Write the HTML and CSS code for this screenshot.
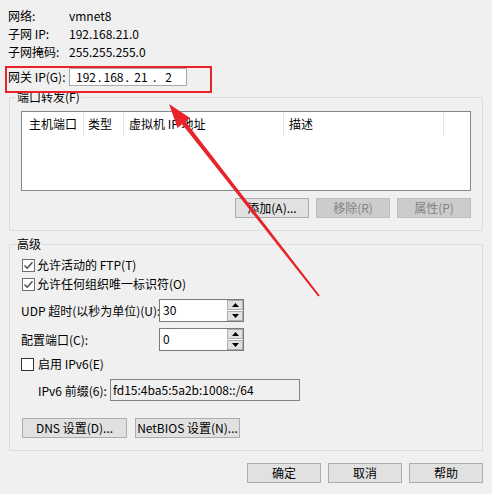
FILE: index.html
```html
<!DOCTYPE html>
<html>
<head>
<meta charset="utf-8">
<link rel="stylesheet" href="styles.css">
</head>
<body>
<div class="dialog">
  <div class="info">
    <div class="row"><span class="lbl">网络:</span><span>vmnet8</span></div>
    <div class="row"><span class="lbl">子网 IP:</span><span>192.168.21.0</span></div>
    <div class="row"><span class="lbl">子网掩码:</span><span>255.255.255.0</span></div>
    <div class="row gw">
      <span class="lbl">网关 IP(G):</span>
      <div class="ipbox"><span class="f">192</span><span class="d">.</span><span class="f">168</span><span class="d">.</span><span class="f">21</span><span class="d">.</span><span class="f">2</span></div>
    </div>
  </div>

  <fieldset class="group g1">
    <legend>端口转发(F)</legend>
    <div class="gbody g1body">
      <div class="listview">
        <div class="lv-head">
          <div class="col c1">主机端口</div>
          <div class="col c2">类型</div>
          <div class="col c3">虚拟机 IP 地址</div>
          <div class="col c4">描述</div>
        </div>
      </div>
      <div class="btnrow">
        <button class="btn">添加(A)...</button>
        <button class="btn" disabled>移除(R)</button>
        <button class="btn" disabled>属性(P)</button>
      </div>
    </div>
  </fieldset>

  <fieldset class="group g2">
    <legend>高级</legend>
    <div class="gbody g2body">
      <div class="cbrow"><span class="cb checked"><svg width="11" height="11" viewBox="0 0 11 11"><path d="M1.5 5.5 L4.2 8.2 L9.5 2.2" fill="none" stroke="#4a4a4a" stroke-width="1.4"/></svg></span><span>允许活动的 FTP(T)</span></div>
      <div class="cbrow cb2"><span class="cb checked"><svg width="11" height="11" viewBox="0 0 11 11"><path d="M1.5 5.5 L4.2 8.2 L9.5 2.2" fill="none" stroke="#4a4a4a" stroke-width="1.4"/></svg></span><span>允许任何组织唯一标识符(O)</span></div>
      <div class="fieldrow udp">
        <span class="flbl">UDP 超时(以秒为单位)(U):</span>
        <div class="spin">
          <span class="val">30</span>
          <div class="sbtns">
            <span class="sb"><svg width="7" height="4" viewBox="0 0 7 4"><path d="M0 4 L3.5 0 L7 4 Z" fill="#000"/></svg></span>
            <span class="sb"><svg width="7" height="4" viewBox="0 0 7 4"><path d="M0 0 L7 0 L3.5 4 Z" fill="#000"/></svg></span>
          </div>
        </div>
      </div>
      <div class="fieldrow port">
        <span class="flbl">配置端口(C):</span>
        <div class="spin">
          <span class="val">0</span>
          <div class="sbtns">
            <span class="sb"><svg width="7" height="4" viewBox="0 0 7 4"><path d="M0 4 L3.5 0 L7 4 Z" fill="#000"/></svg></span>
            <span class="sb"><svg width="7" height="4" viewBox="0 0 7 4"><path d="M0 0 L7 0 L3.5 4 Z" fill="#000"/></svg></span>
          </div>
        </div>
      </div>
      <div class="cbrow ipv6"><span class="cb"></span><span>启用 IPv6(E)</span></div>
      <div class="prefixrow">
        <span class="plbl">IPv6 前缀(6):</span>
        <div class="ro">fd15:4ba5:5a2b:1008::/64</div>
      </div>
      <div class="btnrow2">
        <button class="btn wide">DNS 设置(D)...</button>
        <button class="btn wide">NetBIOS 设置(N)...</button>
      </div>
    </div>
  </fieldset>

  <div class="footer">
    <button class="btn">确定</button>
    <button class="btn">取消</button>
    <button class="btn">帮助</button>
  </div>

  <div class="annot-rect"></div>
  <svg class="arrow" width="492" height="494" viewBox="0 0 492 494">
    <polygon fill="#e8232a" points="169,104 190.1,118 185.5,121.6 319.8,295.4 318.2,296.6 182.1,124.3 177.5,127.9"/>
  </svg>
</div>
</body>
</html>
```

FILE: styles.css
```css
* { box-sizing: border-box; }
html, body { margin: 0; padding: 0; }
body {
  background: #f0f0f0;
  font-family: "Noto Sans CJK SC", "Noto Sans", sans-serif;
  font-size: 12px;
  color: #000;
  width: 492px;
  height: 494px;
  overflow: hidden;
}
.dialog {
  position: relative;
  width: 492px;
  height: 494px;
  padding-top: 7px;
}
.info { padding-left: 8px; }
.row {
  display: flex;
  align-items: center;
  height: 18px;
  line-height: 18px;
}
.lbl { width: 61px; flex: none; white-space: nowrap; }
.gw { margin-top: 7px; }
.ipbox {
  width: 118px;
  height: 18px;
  border: 1px solid #a9a9a9;
  background: #fff;
  display: flex;
  align-items: center;
  padding-left: 6px;
  line-height: 16px;
}
.ipbox .f { width: 20px; text-align: center; }
.ipbox .d { width: 7.5px; text-align: center; }

.group {
  margin: 0 9px;
  padding: 0;
  border: 1px solid #dcdcdc;
  min-width: 0;
}
.group legend {
  margin-left: 6px;
  padding: 0 1px;
  height: 16px;
  line-height: 16px;
}
.g1 { margin-top: 3px; }
.g2 { margin-top: 5px; }
.gbody { padding: 0 11px 12px 11px; }
.g1body { padding-top: 6px; }
.g2body { padding-top: 4px; }

.listview {
  height: 80px;
  border: 1px solid #828790;
  background: #fff;
}
.lv-head { display: flex; height: 24px; }
.col {
  border-right: 1px solid #e5e5e5;
  line-height: 24px;
  padding-left: 5px;
  white-space: nowrap;
}
.c1 { width: 62px; padding-left: 7px; }
.c2 { width: 40px; padding-left: 4px; }
.c3 { width: 160px; }
.c4 { width: 160px; }

.btn {
  font: inherit;
  font-size: 12px;
  color: #000;
  width: 74px;
  height: 20px;
  padding: 0;
  line-height: 18px;
  background: #e1e1e1;
  border: 1px solid #adadad;
  border-radius: 0;
}
.btn:disabled {
  background: #cccccc;
  border-color: #bfbfbf;
  color: #838383;
}
.btnrow {
  display: flex;
  justify-content: flex-end;
  gap: 7px;
  margin-top: 7px;
}

.cbrow {
  display: flex;
  align-items: center;
  height: 18px;
  line-height: 18px;
  padding-left: 1px;
}
.cb2 { margin-top: 1px; }
.ipv6 { margin-top: 4px; padding-left: 0; }
.cb {
  width: 13px;
  height: 13px;
  border: 1px solid #333;
  background: #fff;
  margin-right: 2px;
  display: flex;
  align-items: center;
  justify-content: center;
  flex: none;
}
.cb.checked { border-color: #707070; }
.ipv6 .cb { margin-right: 4px; }

.fieldrow {
  display: flex;
  align-items: center;
  height: 23px;
  margin-top: 6px;
}
.flbl { width: 138px; flex: none; white-space: nowrap; line-height: 18px; }
.spin {
  display: flex;
  width: 85px;
  height: 23px;
  border: 1px solid #7a7a7a;
  background: #fff;
}
.spin .val {
  flex: 1;
  padding-left: 3px;
  line-height: 20px;
}
.sbtns {
  width: 16px;
  display: flex;
  flex-direction: column;
  gap: 1px;
}
.sb {
  height: 10px;
  background: #e1e1e1;
  border: 1px solid #adadad;
  display: flex;
  align-items: center;
  justify-content: center;
}

.prefixrow {
  display: flex;
  align-items: center;
  height: 22px;
  margin-top: 6px;
  padding-left: 17px;
}
.plbl { width: 72px; flex: none; white-space: nowrap; }
.ro {
  width: 190px;
  height: 22px;
  border: 1px solid #838383;
  background: #f0f0f0;
  padding-left: 2px;
  line-height: 19px;
}
.btnrow2 {
  display: flex;
  gap: 8px;
  margin-top: 17px;
  padding-left: 1px;
}
.btn.wide { width: 105px; }

.footer {
  display: flex;
  justify-content: flex-end;
  gap: 7px;
  margin-top: 12px;
  padding-right: 9px;
}

.annot-rect {
  position: absolute;
  left: 5px;
  top: 66px;
  width: 207px;
  height: 27px;
  border: 2px solid #e8232a;
}
.arrow {
  position: absolute;
  left: 0;
  top: 0;
  pointer-events: none;
}
```
